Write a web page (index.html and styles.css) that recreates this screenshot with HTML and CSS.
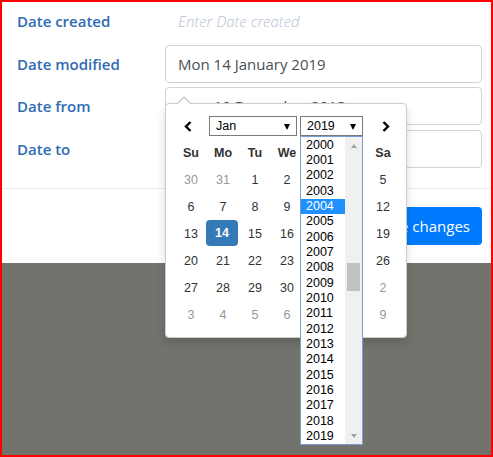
FILE: index.html
```html
<!DOCTYPE html>
<html lang="en">
<head>
  <meta charset="UTF-8" />
  <title>Edit dates</title>
  <link rel="stylesheet" href="styles.css">
</head>
<body>
  <div class="frame">
    <div class="dialog">
      <div class="fields">
        <span class="lbl">Date created</span>
        <span class="val plain">Enter Date created</span>
        <span class="lbl">Date modified</span>
        <span class="val">Mon 14 January 2019</span>
        <span class="lbl">Date from</span>
        <span class="val">Mon 10 December 2018</span>
        <span class="lbl">Date to</span>
        <span class="val"></span>
      </div>
      <div class="footer">
        <button class="btn-save">Save changes</button>
      </div>
    </div>

    <!-- datepicker popup -->
    <div class="picker">
      <div class="pk-head">
        <span class="nav prev"><svg width="8" height="11" viewBox="0 0 8 11"><path d="M6.5 1 L2 5.5 L6.5 10" fill="none" stroke="#000" stroke-width="2.4"/></svg></span>
        <div class="sel month">Jan<i class="caret"></i></div>
        <div class="sel year">2019<i class="caret"></i></div>
        <span class="nav next"><svg width="8" height="11" viewBox="0 0 8 11"><path d="M1.5 1 L6 5.5 L1.5 10" fill="none" stroke="#000" stroke-width="2.4"/></svg></span>
      </div>
      <div class="days">
        <b>Su</b><b>Mo</b><b>Tu</b><b>We</b><b>Th</b><b>Fr</b><b>Sa</b>
        <span class="old">30</span><span class="old">31</span><span>1</span><span>2</span><span>3</span><span>4</span><span>5</span>
        <span>6</span><span>7</span><span>8</span><span>9</span><span>10</span><span>11</span><span>12</span>
        <span>13</span><span class="active">14</span><span>15</span><span>16</span><span>17</span><span>18</span><span>19</span>
        <span>20</span><span>21</span><span>22</span><span>23</span><span>24</span><span>25</span><span>26</span>
        <span>27</span><span>28</span><span>29</span><span>30</span><span>31</span><span class="old">1</span><span class="old">2</span>
        <span class="old">3</span><span class="old">4</span><span class="old">5</span><span class="old">6</span><span class="old">7</span><span class="old">8</span><span class="old">9</span>
      </div>

      <div class="year-list">
        <ul>
          <li>2000</li><li>2001</li><li>2002</li><li>2003</li><li class="hl">2004</li>
          <li>2005</li><li>2006</li><li>2007</li><li>2008</li><li>2009</li>
          <li>2010</li><li>2011</li><li>2012</li><li>2013</li><li>2014</li>
          <li>2015</li><li>2016</li><li>2017</li><li>2018</li><li>2019</li>
        </ul>
        <div class="sbar">
          <span class="sb-btn up"></span>
          <div class="sb-track"><div class="sb-thumb"></div></div>
          <span class="sb-btn down"></span>
        </div>
      </div>
    </div>
  </div>
</body>
</html>
```

FILE: styles.css
```css
body{margin:0;font-family:"Open Sans",sans-serif;}
.frame{width:493px;height:457px;box-sizing:border-box;border:2px solid #ff0000;background:#73736e;position:relative;overflow:hidden;}
.dialog{background:#fff;}
.fields{display:grid;grid-template-columns:148px 1fr;grid-auto-rows:38px;row-gap:4.5px;padding:0 9px 20.5px 15px;border-bottom:1px solid #e9ecef;}
.lbl{display:flex;align-items:center;font-size:15px;font-weight:600;color:#2f6bb2;}
.val{display:flex;align-items:center;box-sizing:border-box;border:1px solid #ced4da;border-radius:4px;padding:0 12px;font-size:15px;color:#495057;}
.val.plain{border-color:transparent;font-style:italic;font-weight:300;color:#b4c0d0;}
.footer{display:flex;justify-content:flex-end;padding:18px 9px;}
.btn-save{height:38px;padding:0 12px;background:#007bff;color:#fff;border:none;border-radius:4px;font-family:"Open Sans",sans-serif;font-size:15px;}

/* datepicker */
.picker{position:absolute;left:163px;top:101px;width:242px;box-sizing:border-box;padding:12px 7px 9px 9px;background:#fff;border:1px solid #ccc;border-radius:4px;box-shadow:0 5px 10px rgba(0,0,0,0.15);font-family:"Liberation Sans",Arial,sans-serif;font-size:12.5px;color:#333;}
.picker::before{content:"";position:absolute;left:11px;top:-8px;border-left:7px solid transparent;border-right:7px solid transparent;border-bottom:7px solid #ccc;}
.picker::after{content:"";position:absolute;left:12px;top:-6px;border-left:6px solid transparent;border-right:6px solid transparent;border-bottom:6px solid #fff;}
.pk-head{display:flex;align-items:center;height:20px;margin-bottom:3px;}
.nav{display:flex;align-items:center;height:20px;}
.prev{width:34px;padding-left:9px;box-sizing:border-box;}
.next{width:36px;padding-left:19px;box-sizing:border-box;}
.sel{position:relative;height:20px;box-sizing:border-box;border:1px solid #7a7a7a;padding-left:6px;display:flex;align-items:center;color:#000;font-size:12.5px;}
.sel.month{width:88px;}
.sel.year{width:63px;margin-left:3px;}
.caret{position:absolute;right:6px;top:7px;border-left:3px solid transparent;border-right:3px solid transparent;border-top:6px solid #000;}
.days{display:grid;grid-template-columns:repeat(7,32px);grid-auto-rows:27px;}
.days b,.days span{display:flex;align-items:center;justify-content:center;}
.days b{font-weight:bold;}
.days .old{color:#999;}
.days .active{background:#337ab7;color:#fff;font-weight:bold;border-radius:4px;margin:0 1px 1px -1px;}

/* open year dropdown */
.year-list{position:absolute;left:134px;top:32px;width:63px;height:309px;box-sizing:border-box;border:1px solid #7a9dd6;background:#fff;display:flex;}
.year-list ul{list-style:none;margin:0;padding:0.6px 0 0;width:44px;}
.year-list li{height:15.35px;line-height:15.35px;padding-left:5px;color:#000;font-size:12.5px;}
.year-list li.hl{background:#1e90ff;color:#fff;}
.sbar{width:17px;background:#f0f0f0;display:flex;flex-direction:column;}
.sb-btn{height:17px;display:flex;align-items:center;justify-content:center;}
.sb-btn.up::before{content:"";border-left:3.5px solid transparent;border-right:3.5px solid transparent;border-bottom:4px solid #a3a3a3;}
.sb-btn.down::before{content:"";border-left:3.5px solid transparent;border-right:3.5px solid transparent;border-top:4px solid #a3a3a3;}
.sb-track{flex:1;}
.sb-thumb{margin:109px 2px 0;height:28px;background:#c1c1c1;}
```
